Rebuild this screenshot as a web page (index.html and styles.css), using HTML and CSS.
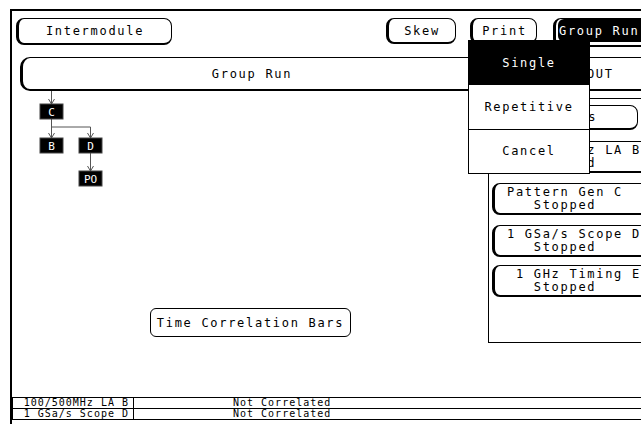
FILE: index.html
```html
<!DOCTYPE html>
<html lang="en">
<head>
<meta charset="utf-8">
<title>Intermodule</title>
<link rel="stylesheet" href="styles.css">
</head>
<body>
<div class="frame">
  <div class="topbar">
    <div class="btn btn-inter">Intermodule</div>
    <div class="btn btn-skew">Skew</div>
    <div class="btn btn-print">Print</div>
    <div class="btn btn-on"><span>Group Run</span></div>
  </div>
  <div class="fields">
    <div class="btn field field-run">Group Run</div>
    <div class="btn field field-port">PORT OUT</div>
  </div>
  <div class="main">
    <div class="tree">
      <svg class="tree-map" width="120" height="100" viewBox="0 0 120 100">
        <g class="links">
          <path d="M39.5 0V13M39.5 28V47M39.5 36H78.5V47M78.5 62V80"/>
          <path d="M36.5 8L39.5 13L42.5 8M36.5 42L39.5 47L42.5 42M75.5 42L78.5 47L81.5 42M75.5 75L78.5 80L81.5 75"/>
        </g>
        <rect x="28" y="13" width="23" height="15"/>
        <text x="39.5" y="24.5">C</text>
        <rect x="28" y="47" width="23" height="15"/>
        <text x="39.5" y="58.5">B</text>
        <rect x="67" y="47" width="23" height="15"/>
        <text x="78.5" y="58.5">D</text>
        <rect x="67" y="80" width="23" height="15"/>
        <text x="78.5" y="91.5">PO</text>
      </svg>
      <div class="btn btn-bars">Time Correlation Bars</div>
    </div>
    <div class="modules">
      <div class="btn mod-top">Modules</div>
      <div class="btn mod mod-first">100/500MHz LA B
   Stopped</div>
      <div class="btn mod">Pattern Gen C
   Stopped</div>
      <div class="btn mod">1 GSa/s Scope D
   Stopped</div>
      <div class="btn mod mod-last"> 1 GHz Timing E
   Stopped</div>
    </div>
  </div>
  <table class="corr">
    <tr><td class="name">100/500MHz LA B</td><td class="state">Not Correlated</td></tr>
    <tr><td class="name">1 GSa/s Scope D</td><td class="state">Not Correlated</td></tr>
  </table>
</div>
<div class="menu">
  <div class="menu-item sel">Single</div>
  <div class="menu-item">Repetitive</div>
  <div class="menu-item">Cancel</div>
</div>
</body>
</html>
```

FILE: styles.css
```css
html, body {margin: 0;}
body {width: 641px; height: 424px; overflow: hidden; position: relative; background: #fff; color: #000; font-family: "DejaVu Sans Mono", monospace; font-size: 12px; letter-spacing: 1.7px;}

.frame {margin: 9px 0 0 10px; width: 720px; height: 415px; border-top: 2px solid #000; border-left: 2px solid #000; box-sizing: border-box;}

.btn {display: flex; align-items: center; justify-content: center; box-sizing: border-box; background: #fff; border: 1px solid #000; border-left-width: 3px; border-bottom-width: 2px; border-radius: 8px;}

.topbar {display: flex; align-items: flex-start; height: 36px; padding-top: 7px; box-sizing: border-box;}
.btn-inter {margin-left: 4px; width: 156px; height: 27px;}
.btn-skew {margin-left: 214px; width: 70px; height: 26px;}
.btn-print {margin-left: 14px; width: 67px; height: 26px;}
.btn-on {margin-left: 16px; width: 110px; height: 29px; padding: 0 0 3px 2px; align-items: stretch; justify-content: flex-start; border-radius: 8px 0 0 8px;}
.btn-on span {flex: 1; display: flex; align-items: center; padding-left: 1px; background: #000; color: #fff; border-radius: 6px 0 0 6px;}

.fields {display: flex; height: 34px; margin-top: 10px;}
.field {height: 34px; border-radius: 10px 0 0 10px;}
.field-run {margin-left: 8px; width: 462px;}
.field-port {margin-left: 6px; width: 178px;}

.main {display: flex; height: 252px;}
.tree {width: 476px; display: flex; flex-direction: column;}
.tree-map {display: block;}
.tree-map rect {fill: #000; stroke: #444;}
.tree-map text {fill: #fff; font-size: 11px; letter-spacing: 0; text-anchor: middle;}
.links {stroke: #555; fill: none;}
.btn-bars {margin: 117px 0 0 138px; width: 201px; height: 29px; border-width: 1px; border-radius: 6px;}

.modules {display: flex; flex-direction: column; margin-top: 7px; width: 170px; height: 245px; padding-left: 3px; border: 1px solid #000; border-right: none; box-sizing: border-box;}
.mod-top {margin-top: 6px; width: 146px; height: 25px;}
.mod {margin-top: 10px; width: 170px; height: 32px; padding-left: 12px; justify-content: flex-start; white-space: pre; line-height: 13px; border-radius: 8px 0 0 8px;}
.mod-first {margin-top: 11px;}
.mod-last {margin-top: 8px;}

.corr {margin-top: 54px; width: 100%; border-collapse: collapse; font-size: 10px; letter-spacing: 1px;}
.corr td {height: 10px; padding: 0; line-height: 10px; border: 1px solid #000; white-space: pre; overflow: hidden;}
.corr .name {width: 116px; padding-right: 4px; text-align: right;}
.corr .state {padding-left: 99px;}

.menu {position: absolute; left: 468px; top: 40px; width: 122px; height: 134px; display: flex; flex-direction: column; background: #fff; border: 1px solid #000; box-sizing: border-box;}
.menu-item {flex: 1; display: flex; align-items: center; justify-content: center;}
.menu-item + .menu-item {border-top: 1px solid #000;}
.menu-item.sel {background: #000; color: #fff;}
```
